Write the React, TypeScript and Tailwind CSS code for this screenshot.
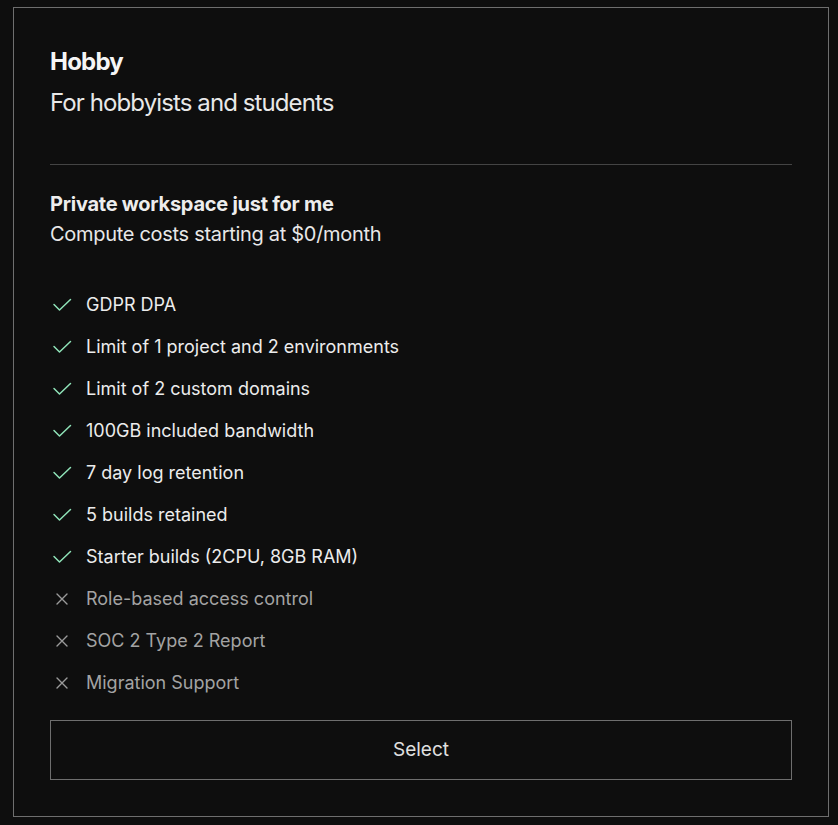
import React from "react";

const features: { label: string; ok: boolean }[] = [
  { label: "GDPR DPA", ok: true },
  { label: "Limit of 1 project and 2 environments", ok: true },
  { label: "Limit of 2 custom domains", ok: true },
  { label: "100GB included bandwidth", ok: true },
  { label: "7 day log retention", ok: true },
  { label: "5 builds retained", ok: true },
  { label: "Starter builds (2CPU, 8GB RAM)", ok: true },
  { label: "Role-based access control", ok: false },
  { label: "SOC 2 Type 2 Report", ok: false },
  { label: "Migration Support", ok: false },
];

function CheckIcon() {
  return (
    <svg width="20" height="14" viewBox="0 0 20 14" fill="none" className="ml-[2px]">
      <polyline points="2,6.5 7.5,12 18.5,1.5" stroke="#8fe3b8" strokeWidth="1.5" strokeLinecap="round" strokeLinejoin="round" />
    </svg>
  );
}

function XIcon() {
  return (
    <svg width="14" height="14" viewBox="0 0 14 14" fill="none" className="ml-[5px]">
      <path d="M2 2 L12 12 M12 2 L2 12" stroke="#9a9a9a" strokeWidth="1.4" strokeLinecap="round" />
    </svg>
  );
}

export default function App() {
  return (
    <div
      className="min-h-screen w-full bg-[#0e0e0e] pl-[13px] pt-[7px]"
      style={{ fontFamily: "Inter, 'Noto Sans', sans-serif" }}
    >
      <div className="w-[816px] h-[810px] border border-[#6e6e6e] px-[36px] pt-[38px] flex flex-col">
        <h1 className="text-[24px] leading-[32px] font-bold tracking-[-0.8px] text-[#f5f5f5]">Hobby</h1>
        <p className="mt-[9px] text-[24px] leading-[32px] tracking-[-0.9px] text-[#e8e8e8]">
          For hobbyists and students
        </p>
        <div className="mt-[45px] h-px bg-[#444444]" />
        <p className="mt-[24px] text-[20px] leading-[30px] font-bold tracking-[-0.25px] text-[#ededed]">
          Private workspace just for me
        </p>
        <p className="text-[20px] leading-[30px] tracking-[-0.3px] text-[#e8e8e8]">
          Compute costs starting at $0/month
        </p>
        <ul className="mt-[35px] flex flex-col">
          {features.map((f) => (
            <li key={f.label} className="flex items-center h-[42px]">
              <span className="w-[36px] flex items-center">{f.ok ? <CheckIcon /> : <XIcon />}</span>
              <span className={`text-[18px] leading-[42px] ${f.ok ? "text-[#ececec]" : "text-[#a3a3a3]"}`}>
                {f.label}
              </span>
            </li>
          ))}
        </ul>
        <button className="mt-[16px] h-[60px] w-full border border-[#6e6e6e] flex items-center justify-center text-[19px] text-[#e0e0e0]">
          Select
        </button>
      </div>
    </div>
  );
}
